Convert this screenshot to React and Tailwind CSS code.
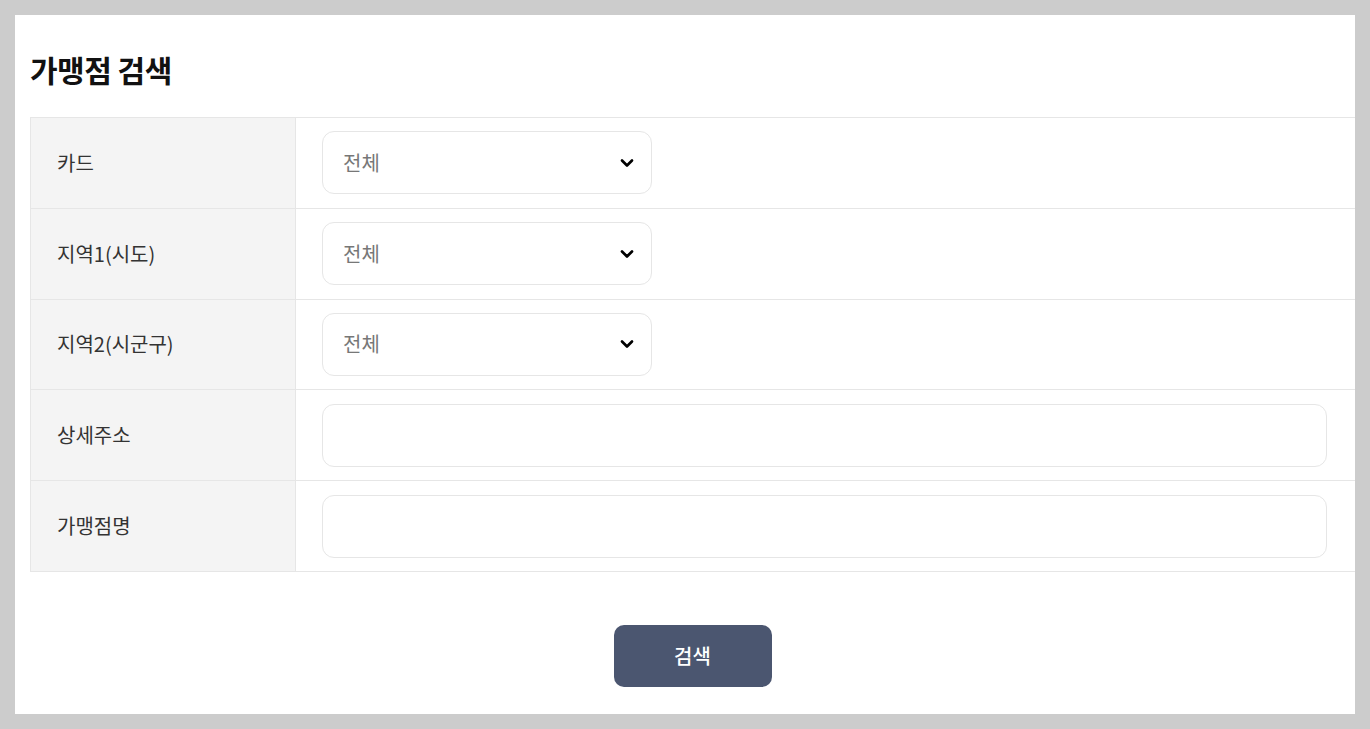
import React from "react";
import { ChevronDown } from "lucide-react";

const ROWS = [
  { label: "카드", type: "select" },
  { label: "지역1(시도)", type: "select" },
  { label: "지역2(시군구)", type: "select" },
  { label: "상세주소", type: "input" },
  { label: "가맹점명", type: "input" },
];

function SelectBox() {
  return (
    <div className="flex h-[63px] w-[330px] items-center justify-between rounded-[12px] border border-[#e6e6e6] bg-white pl-[20px] pr-[14px]">
      <span className="text-[20px] text-[#777]">전체</span>
      <ChevronDown className="h-[20px] w-[20px] text-black" strokeWidth={3.2} />
    </div>
  );
}

export default function App() {
  return (
    <div
      className="min-h-[729px] bg-[#cccccc] p-[15px]"
      style={{ fontFamily: '"Noto Sans CJK KR", "Noto Sans", sans-serif' }}
    >
      <div className="h-[699px] bg-white pl-[15px]">
        {/* Title */}
        <div className="flex h-[102px] items-center pt-[6px]">
          <h1 className="text-[30px] font-bold tracking-[-0.5px] text-[#111]">가맹점 검색</h1>
        </div>

        {/* Search table */}
        <div className="border-l border-t border-[#e6e6e6]">
          {ROWS.map((r) => (
            <div key={r.label} className="grid h-[90.8px] grid-cols-[265px_1fr] border-b border-[#e6e6e6]">
              <div className="flex items-center border-r border-[#e6e6e6] bg-[#f4f4f4] pl-[26px] text-[20px] text-[#333]">
                {r.label}
              </div>
              <div className="flex items-center pl-[26px] pr-[28px]">
                {r.type === "select" ? (
                  <SelectBox />
                ) : (
                  <input
                    type="text"
                    className="h-[63px] w-full rounded-[12px] border border-[#e6e6e6] bg-white px-[20px] text-[20px] outline-none"
                  />
                )}
              </div>
            </div>
          ))}
        </div>

        {/* Button */}
        <div className="flex justify-center pt-[53px]">
          <button className="h-[62px] w-[158px] rounded-[10px] bg-[#4b5670] text-[20px] font-medium text-white">
            검색
          </button>
        </div>
      </div>
    </div>
  );
}
